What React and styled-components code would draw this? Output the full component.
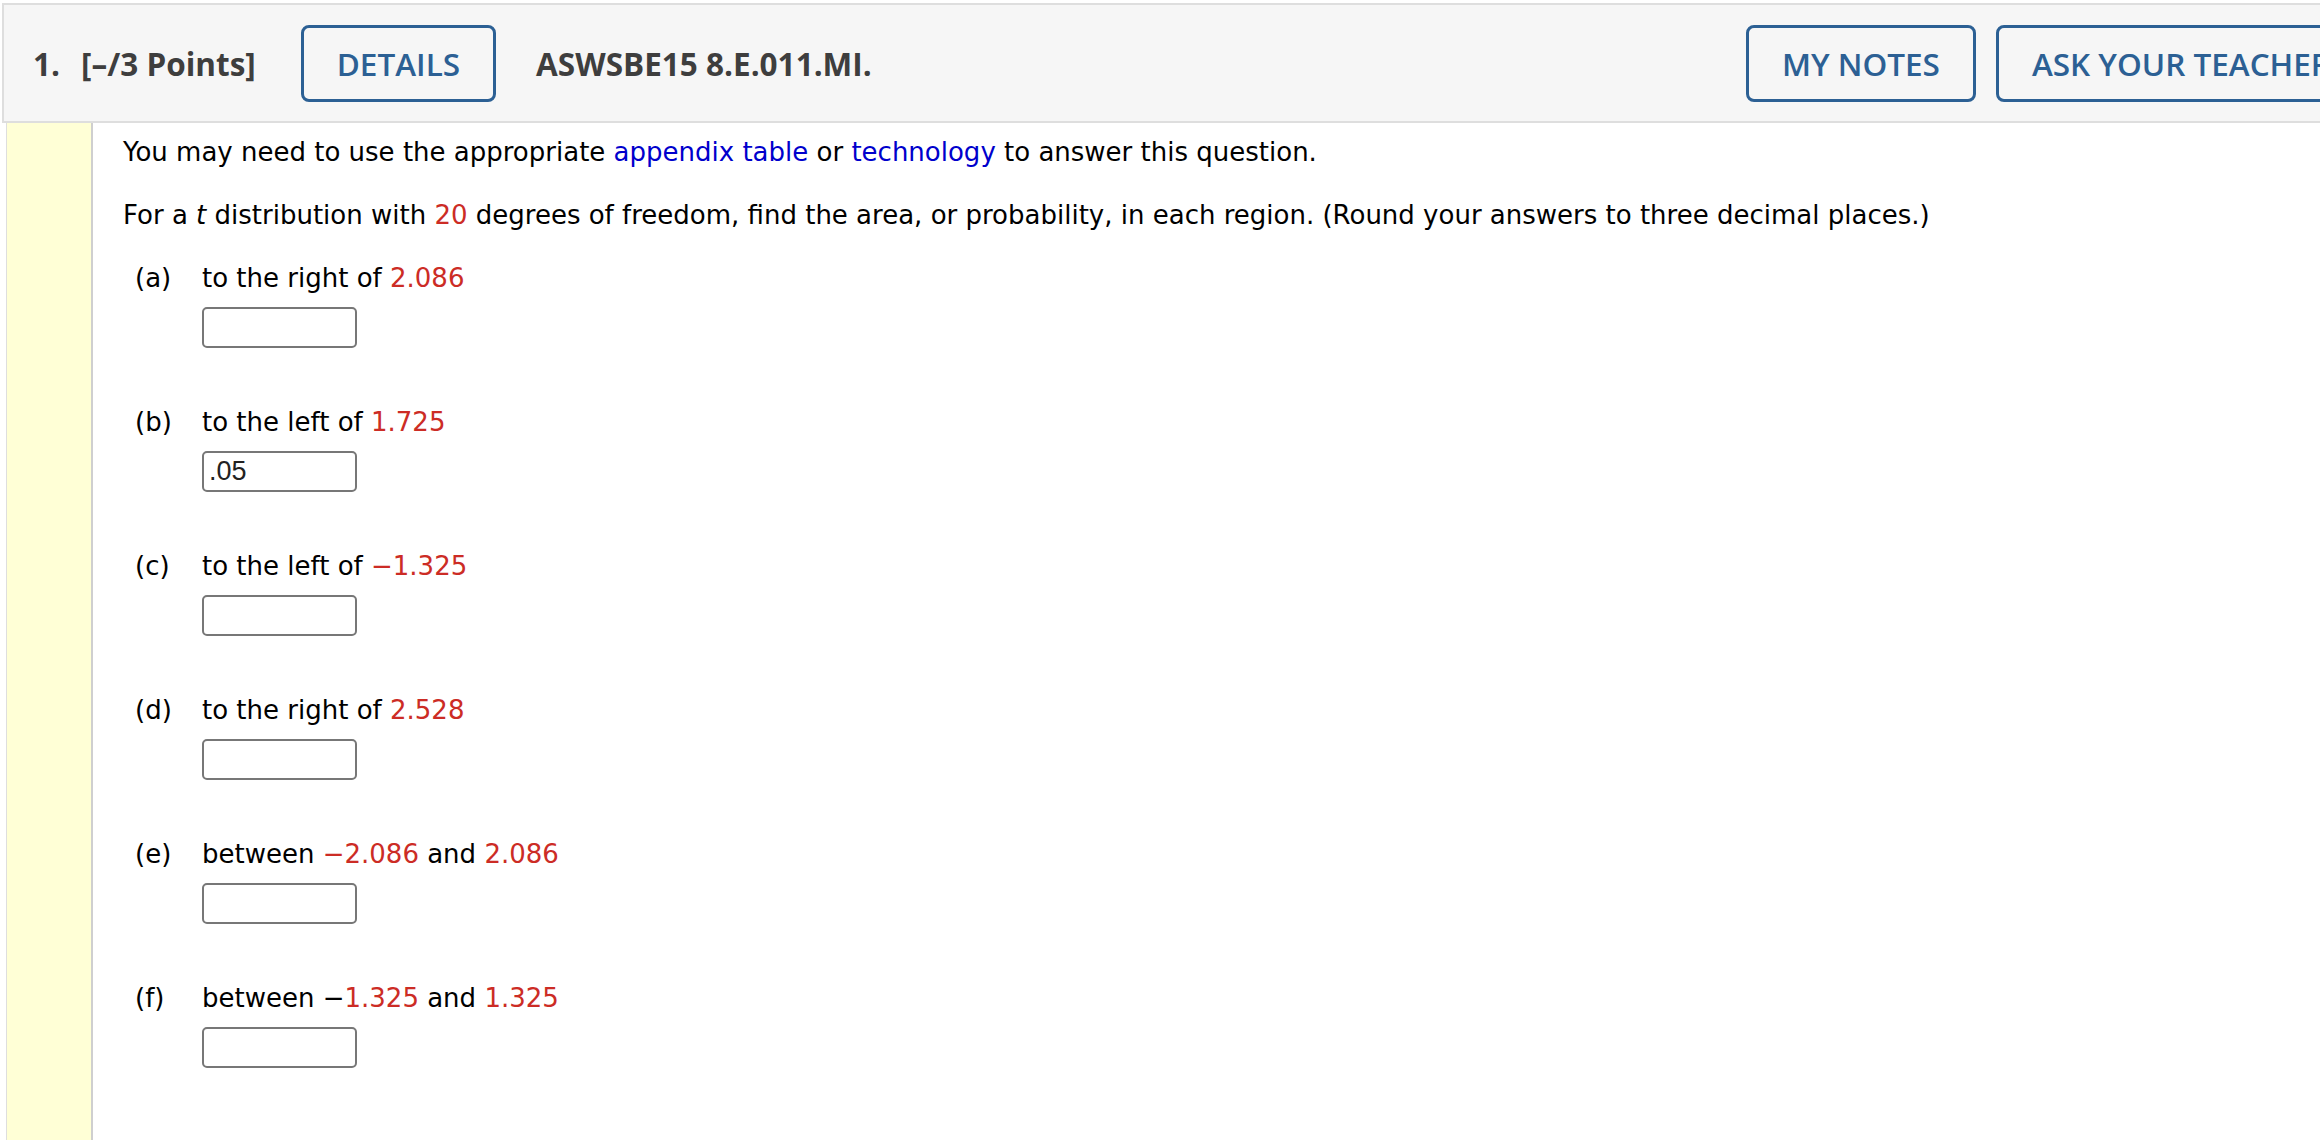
import React from "react";
import styled, { createGlobalStyle } from "styled-components";

const GlobalStyle = createGlobalStyle`
  html, body {
    margin: 0;
    padding: 0;
    background: #fff;
    overflow: hidden;
  }
`;

const parts = [
  { id: "a", text: [["to the right of "], ["2.086", true]] },
  { id: "b", text: [["to the left of "], ["1.725", true]], value: ".05" },
  { id: "c", text: [["to the left of "], ["\u22121.325", true]] },
  { id: "d", text: [["to the right of "], ["2.528", true]] },
  {
    id: "e",
    text: [["between "], ["\u22122.086", true], [" and "], ["2.086", true]],
  },
  {
    id: "f",
    text: [["between \u2212"], ["1.325", true], [" and "], ["1.325", true]],
  },
];

export default function App() {
  return (
    <>
      <GlobalStyle />
      <Page>
        <Header>
          <QTitle>
            <span className="num">1.</span>
            <span>[–/3 Points]</span>
          </QTitle>
          <OutlineButton>DETAILS</OutlineButton>
          <Code>ASWSBE15 8.E.011.MI.</Code>
          <Spacer />
          <OutlineButton>MY NOTES</OutlineButton>
          <OutlineButton>ASK YOUR TEACHER</OutlineButton>
        </Header>

        <Body>
          <Strip />
          <Content>
            <Para>
              You may need to use the appropriate <Link>appendix table</Link>{" "}
              or <Link>technology</Link> to answer this question.
            </Para>
            <Para>
              For a <i>t</i> distribution with <Red>20</Red> degrees of
              freedom, find the area, or probability, in each region. (Round
              your answers to three decimal places.)
            </Para>

            {parts.map((p) => (
              <Part key={p.id}>
                <PartLine>
                  <Label>({p.id})</Label>
                  <span>
                    {p.text.map(([t, red], i) =>
                      red ? <Red key={i}>{t}</Red> : <span key={i}>{t}</span>
                    )}
                  </span>
                </PartLine>
                <AnswerBox type="text" defaultValue={p.value || ""} />
              </Part>
            ))}
          </Content>
        </Body>
      </Page>
    </>
  );
}

const Page = styled.div`
  padding: 3px 0 0 2px;
  width: 2396px;
`;

const Header = styled.div`
  display: flex;
  align-items: center;
  box-sizing: border-box;
  height: 120px;
  padding: 0 29px;
  background: #f6f6f6;
  border: 2px solid #dedede;
  font-family: "Open Sans", "Liberation Sans", sans-serif;
`;

const QTitle = styled.div`
  display: flex;
  font-size: 31.5px;
  font-weight: 700;
  color: #3e3e3e;
  margin-right: 45px;
  .num {
    margin-right: 21px;
  }
`;

const Code = styled.div`
  font-size: 31.5px;
  font-weight: 700;
  color: #3e3e3e;
  margin-left: 40px;
`;

const Spacer = styled.div`
  flex: 1;
`;

const OutlineButton = styled.button`
  box-sizing: border-box;
  height: 77px;
  padding: 0 33px;
  background: transparent;
  border: 3px solid #2c6094;
  border-radius: 8px;
  color: #2c6094;
  font-family: "Open Sans", "Liberation Sans", sans-serif;
  font-size: 31.5px;
  font-weight: 600;
  white-space: nowrap;
  flex-shrink: 0;
  & + & {
    margin-left: 20px;
  }
`;

const Body = styled.div`
  display: flex;
  margin-left: 4px;
  min-height: calc(100vh - 123px);
  border-left: 1px solid #dedede;
`;

const Strip = styled.div`
  width: 84px;
  flex-shrink: 0;
  background: #ffffd6;
  border-right: 2px solid #cfcfcf;
`;

const Content = styled.div`
  padding: 11px 0 0 30px;
  font-family: "DejaVu Sans", Verdana, sans-serif;
  font-size: 26px;
  line-height: 36px;
  color: #000;
  i {
    font-style: italic;
  }
`;

const Para = styled.p`
  margin: 0 0 27px;
  white-space: nowrap;
`;

const Link = styled.span`
  color: #0000cc;
`;

const Red = styled.span`
  color: #cc2c25;
`;

const Part = styled.div`
  padding-left: 12px;
  margin-bottom: 56px;
`;

const PartLine = styled.div`
  display: flex;
`;

const Label = styled.span`
  width: 67px;
  flex-shrink: 0;
`;

const AnswerBox = styled.input`
  display: block;
  box-sizing: border-box;
  width: 155px;
  height: 41px;
  margin: 11px 0 0 67px;
  padding: 0 5px;
  border: 2px solid #777;
  border-radius: 5px;
  font-family: "Liberation Sans", Arial, sans-serif;
  font-size: 27px;
  color: #222;
  background: #fff;
  outline: none;
`;
